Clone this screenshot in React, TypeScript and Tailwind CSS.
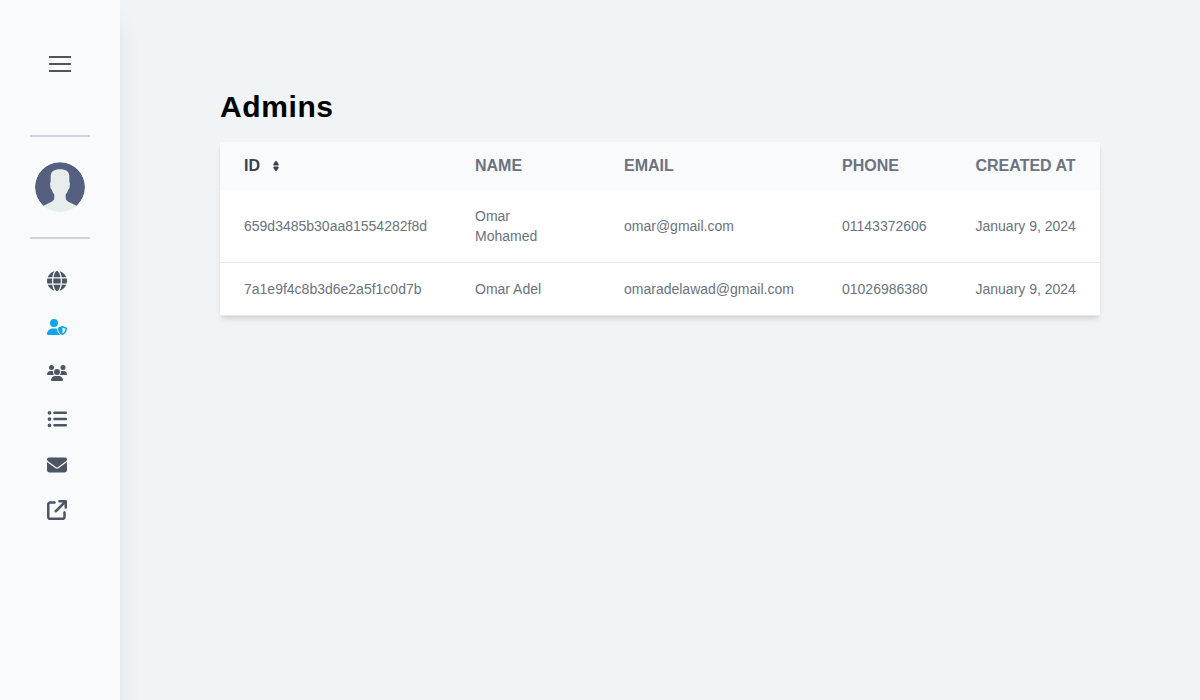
import React from "react";
import { FaGlobe, FaUserShield, FaUsers, FaListUl, FaEnvelope, FaArrowUpRightFromSquare } from "react-icons/fa6";

const navItems = [
  { label: "Website", Icon: FaGlobe, active: false },
  { label: "Admins", Icon: FaUserShield, active: true },
  { label: "Users", Icon: FaUsers, active: false },
  { label: "Lists", Icon: FaListUl, active: false },
  { label: "Messages", Icon: FaEnvelope, active: false },
  { label: "Open", Icon: FaArrowUpRightFromSquare, active: false },
];

const admins = [
  { id: "659d3485b30aa81554282f8d", name: "Omar Mohamed", email: "omar@gmail.com", phone: "01143372606", created: "January 9, 2024" },
  { id: "7a1e9f4c8b3d6e2a5f1c0d7b", name: "Omar Adel", email: "omaradelawad@gmail.com", phone: "01026986380", created: "January 9, 2024" },
];

function Avatar() {
  return (
    <svg className="size-[50px] rounded-full" viewBox="0 0 50 50">
      <path d="M8.5 44A25 25 0 1 1 41.5 44Z" fill="#556080" />
      <path
        d="M25 7.2C19 7.2 15.7 9.2 15.7 14.5L15.6 20C15 20.8 15 22.4 15.2 24C15.4 26 16 27.2 17 28C17.5 30 18.2 31.3 19.3 32.5V36C19.3 38.5 17 39.8 13 41.6C11 42.5 9.8 43.2 8.5 44V50H41.5V44C40.2 43.2 39 42.5 37 41.6C33 39.8 30.7 38.5 30.7 36V32.5C31.8 31.3 32.5 30 33 28C34 27.2 34.6 26 34.8 24C35 22.4 35 20.8 34.4 20L34.3 14.5C34.3 9.2 31 7.2 25 7.2Z"
        fill="#e7eced"
      />
    </svg>
  );
}

function SortIcon() {
  return (
    <svg className="ml-2.5 size-3" viewBox="0 0 24 24" fill="currentColor">
      <path d="M8.574 11.024h6.852a2.075 2.075 0 0 0 1.847-1.086 1.9 1.9 0 0 0-.11-1.986L13.736 2.9a2.122 2.122 0 0 0-3.472 0L6.837 7.952a1.9 1.9 0 0 0-.11 1.986 2.074 2.074 0 0 0 1.847 1.086Zm6.852 1.952H8.574a2.072 2.072 0 0 0-1.847 1.087 1.9 1.9 0 0 0 .11 1.985l3.426 5.05a2.123 2.123 0 0 0 3.472 0l3.427-5.05a1.9 1.9 0 0 0 .11-1.985 2.074 2.074 0 0 0-1.846-1.087Z" />
    </svg>
  );
}

export default function App() {
  return (
    <div className="flex h-screen overflow-hidden bg-[#f0f4f7] font-['Liberation_Sans',Arial,sans-serif]">
      <aside className="flex w-[120px] shrink-0 flex-col items-center bg-[#f9fafc] pt-14 shadow-xl">
        <button aria-label="Menu" className="flex w-[22px] flex-col gap-[5px]">
          <span className="h-0.5 bg-[#4b5563]" />
          <span className="h-0.5 bg-[#4b5563]" />
          <span className="h-0.5 bg-[#4b5563]" />
        </button>
        <div className="mt-[63px] flex h-[104px] w-[60px] items-center justify-center border-y-2 border-[#d1d5db]">
          <Avatar />
        </div>
        <nav className="mt-8 mr-1.5 flex flex-col gap-[26px]">
          {navItems.map(({ label, Icon, active }) => (
            <a key={label} aria-label={label} className={active ? "text-[#0ea5e9]" : "text-[#4b5563] last:-mt-px"}>
              <Icon className="size-5" />
            </a>
          ))}
        </nav>
      </aside>
      <main className="flex-1 px-[100px] pt-[89px]">
        <h1 className="text-3xl leading-9 font-bold tracking-[0.6px] text-black">Admins</h1>
        <div className="mt-[17px] w-[880px] rounded-xs bg-white shadow-md">
          <table className="w-full table-fixed text-left text-sm text-[#6b7280]">
            <colgroup>
              <col className="w-[231px]" />
              <col className="w-[149px]" />
              <col className="w-[218px]" />
              <col className="w-[133.5px]" />
              <col className="w-[148.5px]" />
            </colgroup>
            <thead className="bg-[#f9fafc] text-base uppercase">
              <tr className="h-12">
                <th className="px-6 font-bold text-[#374151]">
                  <div className="flex items-center">ID<SortIcon /></div>
                </th>
                <th className="px-6 font-bold">Name</th>
                <th className="px-6 font-bold">Email</th>
                <th className="px-6 font-bold">Phone</th>
                <th className="pl-6 font-bold whitespace-nowrap">Created at</th>
              </tr>
            </thead>
            <tbody>
              {admins.map((a) => (
                <tr key={a.id} className="border-b border-[#e5e7eb] bg-white">
                  <td className="px-6 py-4">{a.id}</td>
                  <td className="px-6 py-4">{a.name}</td>
                  <td className="px-6 py-4">{a.email}</td>
                  <td className="px-6 py-4 whitespace-nowrap">{a.phone}</td>
                  <td className="py-4 pl-6 whitespace-nowrap">{a.created}</td>
                </tr>
              ))}
            </tbody>
          </table>
        </div>
      </main>
    </div>
  );
}
